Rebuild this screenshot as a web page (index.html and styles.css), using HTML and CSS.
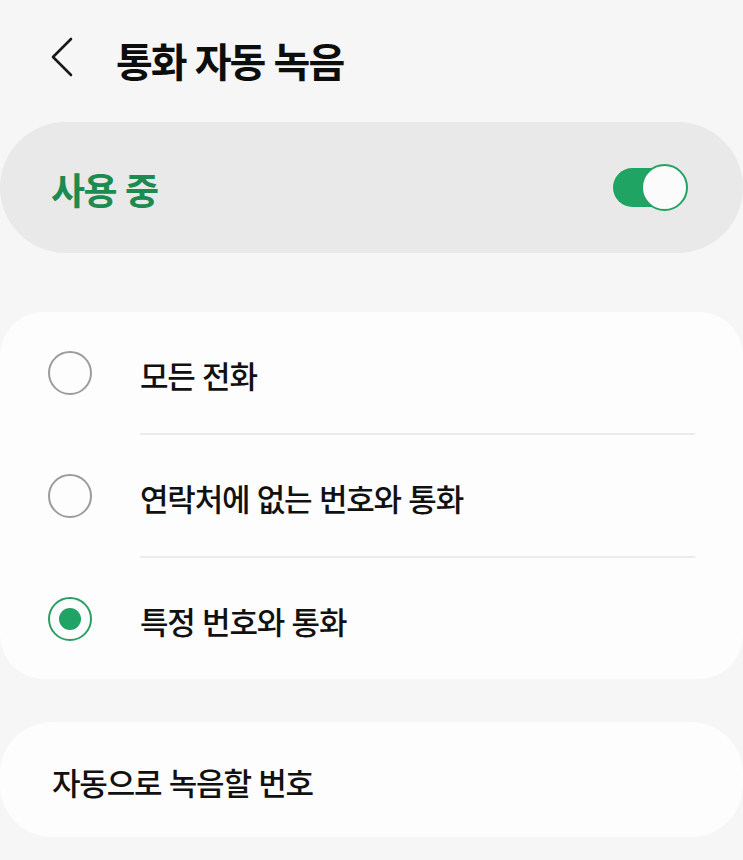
FILE: index.html
```html
<!DOCTYPE html>
<html lang="ko">
<head>
<meta charset="utf-8">
<title>통화 자동 녹음</title>
<link rel="stylesheet" href="styles.css">
</head>
<body>
<header class="header">
  <svg class="back" width="24" height="40" viewBox="0 0 24 40" aria-hidden="true">
    <path d="M21 2 L3 20 L21 38" fill="none" stroke="#1a1a1a" stroke-width="2.6" stroke-linecap="round" stroke-linejoin="round"/>
  </svg>
  <h1 class="title">통화 자동 녹음</h1>
</header>

<section class="master">
  <span class="master-label">사용 중</span>
  <span class="toggle"><span class="toggle-track"></span><span class="toggle-thumb"></span></span>
</section>

<section class="card options">
  <div class="option">
    <span class="radio"></span>
    <span class="option-text">모든 전화</span>
  </div>
  <div class="divider"></div>
  <div class="option">
    <span class="radio"></span>
    <span class="option-text">연락처에 없는 번호와 통화</span>
  </div>
  <div class="divider"></div>
  <div class="option">
    <span class="radio radio-on"></span>
    <span class="option-text">특정 번호와 통화</span>
  </div>
</section>

<section class="card numbers">
  <span class="numbers-text">자동으로 녹음할 번호</span>
</section>
</body>
</html>
```

FILE: styles.css
```css
* { box-sizing: border-box; }

html, body {
  margin: 0;
  padding: 0;
  background: #f6f6f6;
  font-family: "Noto Sans CJK KR", "Noto Sans", sans-serif;
  color: #111;
}

.header {
  height: 122px;
  display: flex;
  align-items: center;
  padding: 0 0 8px 50px;
}

.back {
  flex: none;
  margin-right: 42px;
}

.title {
  margin: 0;
  padding-top: 6px;
  font-size: 40px;
  font-weight: 700;
  letter-spacing: -2px;
  line-height: 1;
  color: #0d0d0d;
}

.master {
  height: 131px;
  background: #e9e9e9;
  border-radius: 66px;
  display: flex;
  align-items: center;
  justify-content: space-between;
  padding: 0 55px 0 51px;
}

.master-label {
  font-size: 37px;
  font-weight: 700;
  letter-spacing: -1.5px;
  color: #1d8a4f;
  line-height: 1;
  padding-top: 4px;
}

.toggle {
  position: relative;
  width: 75px;
  height: 47px;
  flex: none;
}

.toggle-track {
  position: absolute;
  left: 0;
  top: 4px;
  width: 70px;
  height: 39px;
  border-radius: 20px;
  background: #1fa463;
}

.toggle-thumb {
  position: absolute;
  right: 0;
  top: 0;
  width: 47px;
  height: 47px;
  border-radius: 50%;
  background: #fbfbfb;
  border: 2.5px solid #22a263;
}

.card {
  background: #fdfdfd;
  border-radius: 44px;
}

.options {
  margin-top: 59px;
  display: flex;
  flex-direction: column;
}

.option {
  height: 121px;
  display: flex;
  align-items: center;
  padding-left: 48px;
  gap: 48px;
}

.radio {
  flex: none;
  width: 44px;
  height: 44px;
  border-radius: 50%;
  border: 2.5px solid #9c9c9c;
  display: flex;
  align-items: center;
  justify-content: center;
}

.radio-on {
  border: 2.5px solid #2a9f63;
}

.radio-on::after {
  content: "";
  width: 22px;
  height: 22px;
  border-radius: 50%;
  background: #20a364;
}

.option-text,
.numbers-text {
  font-size: 31px;
  font-weight: 500;
  letter-spacing: -1.2px;
  line-height: 1;
  color: #111;
  padding-top: 4px;
}

.divider {
  height: 2px;
  background: #ebebeb;
  margin: 0 48px 0 140px;
}

.numbers {
  margin-top: 43px;
  height: 115px;
  border-radius: 52px;
  display: flex;
  align-items: center;
  padding-left: 52px;
}
```
